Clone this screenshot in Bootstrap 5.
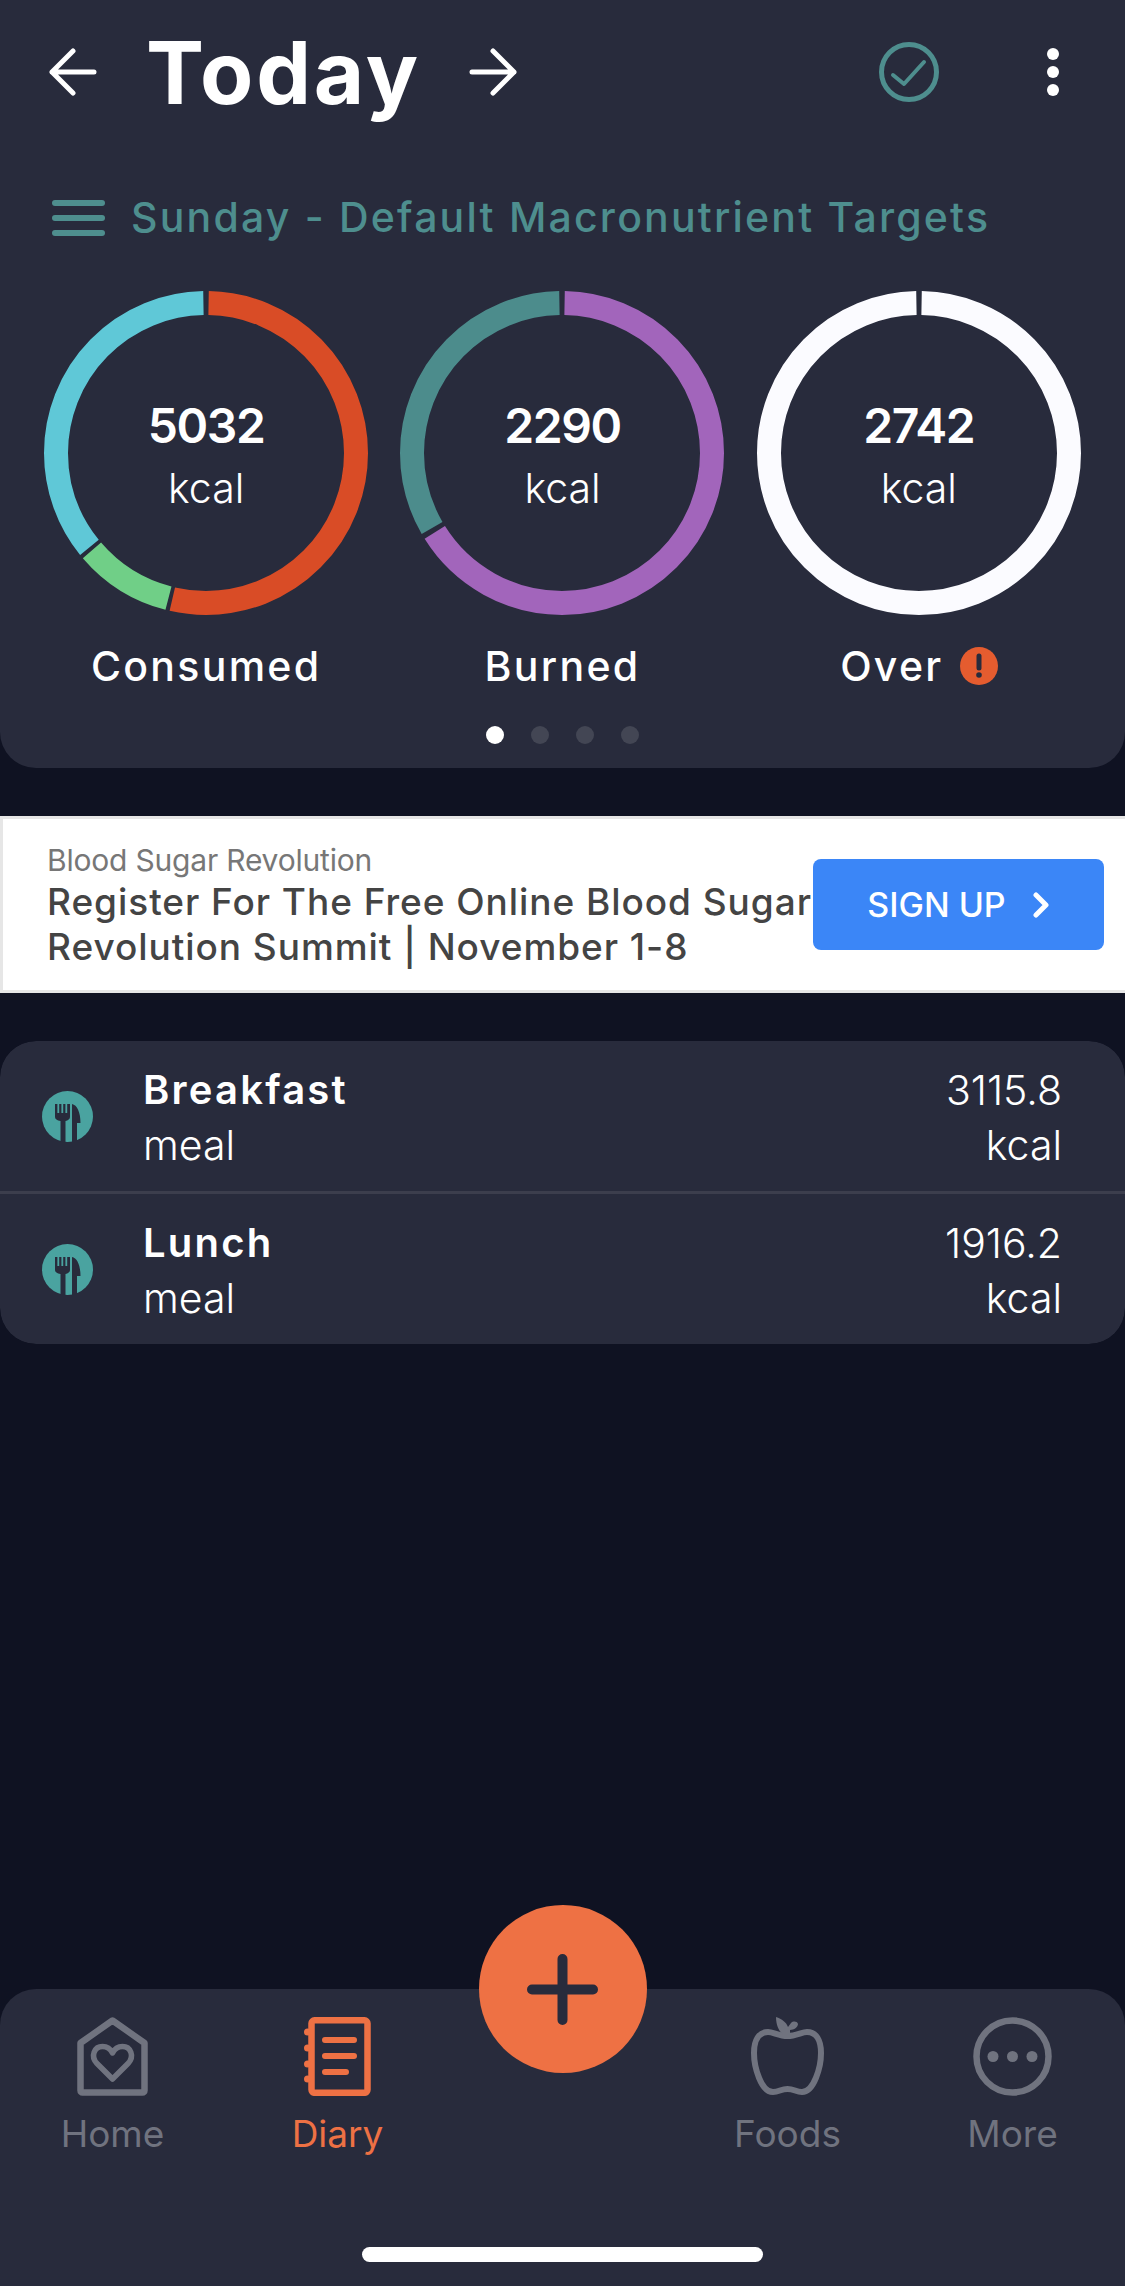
<!DOCTYPE html>
<html lang="en">
  <head>
    <meta charset="UTF-8" />
    <meta name="viewport" content="width=device-width, initial-scale=1.0" />
    <title>Diary - Today</title>
    <link href="https://cdn.jsdelivr.net/npm/bootstrap@5.3.2/dist/css/bootstrap.min.css" rel="stylesheet" />
    <style>
      html, body {
        height: 100%;
      }
      body {
        background-color: #0f1222;
        color: #fff;
        font-family: Inter, "Noto Sans", sans-serif;
      }
      .app-screen {
        height: 2286px;
      }
      .top-panel {
        background-color: #282b3c;
        border-radius: 0 0 36px 36px;
        padding-bottom: 24px;
      }
      .title-row {
        height: 144px;
        padding-left: 49px;
        padding-right: 66px;
      }
      .day-title {
        font-size: 87px;
        font-weight: 700;
        line-height: 1;
        letter-spacing: 2.8px;
        margin: 0 48px 0 49px;
      }
      .check-icon {
        margin-right: 108px;
      }
      .target-row {
        height: 56px;
        margin-top: 46px;
        padding-left: 52px;
        gap: 26px;
        color: #4e8e8e;
        font-size: 41px;
        font-weight: 500;
        letter-spacing: 2.2px;
      }
      .ring-row {
        margin-top: 45px;
        padding: 0 28px;
      }
      .ring-box {
        width: 324px;
        height: 324px;
      }
      .ring-box svg {
        transform: rotate(-90deg);
      }
      .ring-center {
        margin-top: 4px;
      }
      .ring-value {
        font-size: 48px;
        font-weight: 600;
        line-height: 60px;
        letter-spacing: -1.4px;
      }
      .ring-unit {
        padding-top: 2px;
        font-size: 41px;
        font-weight: 300;
        line-height: 60px;
      }
      .ring-label {
        margin-top: 26px;
        font-size: 41px;
        font-weight: 500;
        line-height: 50px;
        letter-spacing: 2.3px;
        gap: 16px;
      }
      .pager {
        margin-top: 35px;
        gap: 27px;
      }
      .pager-dot {
        width: 18px;
        height: 18px;
        background-color: #434654;
      }
      .pager-dot.on {
        background-color: #fff;
      }
      .ad-banner {
        margin-top: 48px;
        height: 177px;
        background-color: #fff;
        border-top: 3px solid #e6e6e6;
        border-bottom: 3px solid #e6e6e6;
        border-left: 3px solid #e6e6e6;
        padding-left: 44px;
        padding-right: 21px;
        color: #444;
      }
      .ad-source {
        font-size: 30px;
        line-height: 38px;
        letter-spacing: -0.2px;
        color: #777;
      }
      .ad-headline {
        font-size: 37px;
        font-weight: 500;
        line-height: 45px;
        letter-spacing: 0.95px;
        white-space: nowrap;
      }
      .ad-button {
        width: 291px;
        height: 91px;
        background-color: #3b86f7;
        border: 0;
        border-radius: 8px;
        color: #fff;
        font-size: 34px;
        font-weight: 500;
        gap: 26px;
      }
      .meal-list {
        margin-top: 48px;
        border-radius: 36px;
      }
      .meal-list .list-group-item {
        height: 150px;
        padding: 0 63px 0 42px;
        background-color: #282b3c;
        color: #fff;
        border-color: #3c3e4d;
        border-width: 0 0 3px;
      }
      .meal-list .list-group-item:first-child {
        height: 153px;
      }
      .meal-list .list-group-item:last-child {
        border-width: 0;
      }
      .meal-text {
        margin-left: 50px;
      }
      .meal-name {
        padding-top: 6px;
        font-size: 40px;
        font-weight: 600;
        line-height: 52px;
        letter-spacing: 2.2px;
      }
      .meal-line {
        font-size: 41px;
        font-weight: 300;
        line-height: 58px;
      }
      .meal-line.top-line {
        padding-top: 6px;
        line-height: 52px;
      }
      .bottom-nav {
        height: 297px;
        padding-top: 28px;
        background-color: #282b3c;
        border-radius: 36px 36px 0 0;
      }
      .nav-cell {
        color: #70737f;
        font-size: 37px;
        line-height: 44px;
      }
      .nav-cell.on {
        color: #ee7144;
      }
      .nav-pic {
        height: 79px;
        margin-bottom: 16px;
      }
      .add-btn {
        top: -84px;
        left: 478.5px;
        width: 168px;
        height: 168px;
        padding: 0;
        background-color: #ee7144;
        border: 0;
      }
      .home-bar {
        width: 401px;
        height: 15px;
        margin-bottom: 24px;
        background-color: #fff;
      }
    </style>
  </head>
  <body>
    <div class="app-screen d-flex flex-column">
      <div class="top-panel">
        <div class="title-row d-flex align-items-center">
          <svg width="48" height="48" viewBox="0 0 48 48" fill="none" stroke="#fff" stroke-width="5" stroke-linecap="round" stroke-linejoin="round">
            <path d="M45 24H3M24 3L3 24l21 21" />
          </svg>
          <h1 class="day-title">Today</h1>
          <svg width="48" height="48" viewBox="0 0 48 48" fill="none" stroke="#fff" stroke-width="5" stroke-linecap="round" stroke-linejoin="round">
            <path d="M3 24h42M24 3l21 21-21 21" />
          </svg>
          <svg class="check-icon ms-auto" width="60" height="60" viewBox="0 0 60 60" fill="none" stroke="#4e8e8e" stroke-linecap="round" stroke-linejoin="round">
            <circle cx="30" cy="30" r="27.5" stroke-width="5" />
            <path d="M14 33l11 9 20-22" stroke-width="4" />
          </svg>
          <svg width="12" height="48" viewBox="0 0 12 48" fill="#fff">
            <circle cx="6" cy="6" r="6" />
            <circle cx="6" cy="24" r="6" />
            <circle cx="6" cy="42" r="6" />
          </svg>
        </div>

        <div class="target-row d-flex align-items-center">
          <svg width="53" height="36" viewBox="0 0 53 36" fill="#4e8e8e">
            <rect y="0" width="53" height="6" rx="3" />
            <rect y="15" width="53" height="6" rx="3" />
            <rect y="30" width="53" height="6" rx="3" />
          </svg>
          <span>Sunday - Default Macronutrient Targets</span>
        </div>

        <div class="ring-row row g-0">
          <div class="col-4 d-flex flex-column align-items-center">
            <div class="ring-box position-relative">
              <svg width="324" height="324" viewBox="0 0 324 324" fill="none" stroke-width="24">
                <circle cx="162" cy="162" r="150" pathLength="360" stroke="#d94c26" stroke-dasharray="192 168" stroke-dashoffset="-1" />
                <circle cx="162" cy="162" r="150" pathLength="360" stroke="#70cf87" stroke-dasharray="35 325" stroke-dashoffset="-194.5" />
                <circle cx="162" cy="162" r="150" pathLength="360" stroke="#5fc8d7" stroke-dasharray="128 232" stroke-dashoffset="-231" />
              </svg>
              <div class="ring-center position-absolute top-50 start-50 translate-middle text-center">
                <div class="ring-value">5032</div>
                <div class="ring-unit">kcal</div>
              </div>
            </div>
            <div class="ring-label d-flex align-items-center">Consumed</div>
          </div>
          <div class="col-4 d-flex flex-column align-items-center">
            <div class="ring-box position-relative">
              <svg width="324" height="324" viewBox="0 0 324 324" fill="none" stroke-width="24">
                <circle cx="162" cy="162" r="150" pathLength="360" stroke="#a265bb" stroke-dasharray="237 123" stroke-dashoffset="-1" />
                <circle cx="162" cy="162" r="150" pathLength="360" stroke="#4c8c8c" stroke-dasharray="119 241" stroke-dashoffset="-240" />
              </svg>
              <div class="ring-center position-absolute top-50 start-50 translate-middle text-center">
                <div class="ring-value">2290</div>
                <div class="ring-unit">kcal</div>
              </div>
            </div>
            <div class="ring-label d-flex align-items-center">Burned</div>
          </div>
          <div class="col-4 d-flex flex-column align-items-center">
            <div class="ring-box position-relative">
              <svg width="324" height="324" viewBox="0 0 324 324" fill="none" stroke-width="24">
                <circle cx="162" cy="162" r="150" pathLength="360" stroke="#fbfbff" stroke-dasharray="358 2" stroke-dashoffset="-1" />
              </svg>
              <div class="ring-center position-absolute top-50 start-50 translate-middle text-center">
                <div class="ring-value">2742</div>
                <div class="ring-unit">kcal</div>
              </div>
            </div>
            <div class="ring-label d-flex align-items-center">
              Over
              <svg width="38" height="38" viewBox="0 0 38 38">
                <circle cx="19" cy="19" r="19" fill="#e55c2f" />
                <path d="M19 9v12" stroke="#282b3c" stroke-width="5" stroke-linecap="round" />
                <circle cx="19" cy="28" r="2.8" fill="#282b3c" />
              </svg>
            </div>
          </div>
        </div>

        <div class="pager d-flex justify-content-center">
          <span class="pager-dot on rounded-circle"></span>
          <span class="pager-dot rounded-circle"></span>
          <span class="pager-dot rounded-circle"></span>
          <span class="pager-dot rounded-circle"></span>
        </div>
      </div>

      <div class="ad-banner d-flex align-items-center justify-content-between">
        <div>
          <div class="ad-source">Blood Sugar Revolution</div>
          <div class="ad-headline">Register For The Free Online Blood Sugar<br />Revolution Summit | November 1-8</div>
        </div>
        <button class="ad-button btn d-flex align-items-center justify-content-center flex-shrink-0" type="button">
          SIGN UP
          <svg width="18" height="26" viewBox="0 0 18 26" fill="none" stroke="#fff" stroke-width="5" stroke-linecap="round" stroke-linejoin="round">
            <path d="M4 3l10 10L4 23" />
          </svg>
        </button>
      </div>

      <ul class="meal-list list-group list-group-flush overflow-hidden">
        <li class="list-group-item d-flex align-items-center">
          <svg width="51" height="51" viewBox="0 0 51 51">
            <circle cx="25.5" cy="25.5" r="25.5" fill="#4aa3a0" />
            <path fill="#282b3c" d="M13 13h2.4v9h1.8v-9h2.2v9h1.8v-9h2.2v9h1.8v-9H28v13c0 2-2 3.5-4.5 4V51h-5V30C15 29.500 13 28 13 26zM30 13c5 1 8.500 8 8.500 19H35v19h-5z" />
          </svg>
          <div class="meal-text">
            <div class="meal-name">Breakfast</div>
            <div class="meal-line">meal</div>
          </div>
          <div class="ms-auto text-end">
            <div class="meal-line top-line">3115.8</div>
            <div class="meal-line">kcal</div>
          </div>
        </li>
        <li class="list-group-item d-flex align-items-center">
          <svg width="51" height="51" viewBox="0 0 51 51">
            <circle cx="25.5" cy="25.5" r="25.5" fill="#4aa3a0" />
            <path fill="#282b3c" d="M13 13h2.4v9h1.8v-9h2.2v9h1.8v-9h2.2v9h1.8v-9H28v13c0 2-2 3.5-4.5 4V51h-5V30C15 29.500 13 28 13 26zM30 13c5 1 8.500 8 8.500 19H35v19h-5z" />
          </svg>
          <div class="meal-text">
            <div class="meal-name">Lunch</div>
            <div class="meal-line">meal</div>
          </div>
          <div class="ms-auto text-end">
            <div class="meal-line top-line">1916.2</div>
            <div class="meal-line">kcal</div>
          </div>
        </li>
      </ul>

      <nav class="bottom-nav mt-auto position-relative d-flex flex-column">
        <button class="add-btn btn rounded-circle position-absolute d-flex align-items-center justify-content-center" type="button">
          <svg width="71" height="71" viewBox="0 0 71 71" fill="none" stroke="#282b3c" stroke-width="10" stroke-linecap="round">
            <path d="M35.500 5v61M5 35.500h61" />
          </svg>
        </button>
        <div class="row g-0 row-cols-5">
          <div class="col nav-cell text-center">
            <div class="nav-pic">
              <svg width="71" height="79" viewBox="0 0 71 79" fill="none" stroke="#70737f" stroke-linejoin="round">
                <path d="M35.500 3.500L67.500 26v47.500a2 2 0 0 1-2 2h-60a2 2 0 0 1-2-2V26z" stroke-width="6.500" />
                <path d="M35.500 62L20 46.500C13 39 17.500 29.500 25.500 29.500c4.500 0 8 2.500 10 6.500 2-4 5.500-6.500 10-6.500 8 0 12.500 9.500 5.500 17z" stroke-width="5.500" />
              </svg>
            </div>
            Home
          </div>
          <div class="col nav-cell on text-center">
            <div class="nav-pic">
              <svg width="67" height="79" viewBox="0 0 67 79" fill="none" stroke="#ee7144">
                <rect x="7.500" y="3.300" width="56" height="72.500" rx="3" stroke-width="6.500" />
                <path d="M21 23h29M21 39h29M21 55h21" stroke-width="6" stroke-linecap="round" />
                <g fill="#ee7144" stroke="none">
                  <circle cx="3.500" cy="15" r="3.500" />
                  <circle cx="3.500" cy="31" r="3.500" />
                  <circle cx="3.500" cy="47" r="3.500" />
                  <circle cx="3.500" cy="62" r="3.500" />
                </g>
              </svg>
            </div>
            Diary
          </div>
          <div class="col"></div>
          <div class="col nav-cell text-center">
            <div class="nav-pic">
              <svg width="73" height="79" viewBox="0 0 73 79" fill="none" stroke="#70737f" stroke-width="6">
                <path d="M36.500 19C28 19 22 15 17 15 8 15 3 23 3 36c0 14 7 39 19 39 6 0 8-3 14.500-3s8.500 3 14.500 3c12 0 19-25 19-39 0-13-5-21-14-21-5 0-11 4-19.500 4z" />
                <path fill="#70737f" stroke="none" d="M25 0c0 8 3 15 8 18h6v-5c4 0 8-3 8-6-1-3-5-3-7-1l-3 4C35 5 31 2 25 0z" />
              </svg>
            </div>
            Foods
          </div>
          <div class="col nav-cell text-center">
            <div class="nav-pic">
              <svg width="79" height="79" viewBox="0 0 79 79" fill="none" stroke="#70737f" stroke-width="6.500">
                <circle cx="39.500" cy="39.500" r="36" />
                <g fill="#70737f" stroke="none">
                  <circle cx="20" cy="39.500" r="5.500" />
                  <circle cx="39.500" cy="39.500" r="5.500" />
                  <circle cx="59" cy="39.500" r="5.500" />
                </g>
              </svg>
            </div>
            More
          </div>
        </div>
        <div class="home-bar rounded-pill mx-auto mt-auto"></div>
      </nav>
    </div>
    <script src="https://cdn.jsdelivr.net/npm/bootstrap@5.3.2/dist/js/bootstrap.bundle.min.js"></script>
  </body>
</html>
